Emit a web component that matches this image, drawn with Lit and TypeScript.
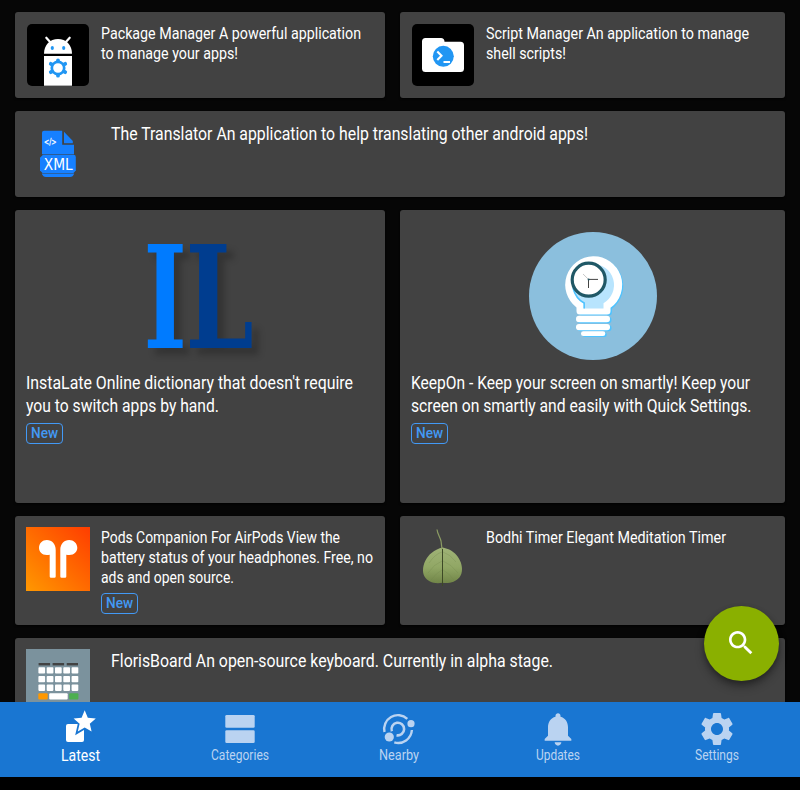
import { LitElement, html, css, svg } from "lit";
import { customElement, property } from "lit/decorators.js";

type Line = [text: string, width: number];

interface AppCard {
  icon: string;
  layout: "small" | "wide" | "large";
  lines: Line[];
  isNew?: boolean;
}

const cards: AppCard[] = [
  { icon: "package", layout: "small", lines: [["Package Manager A powerful application", 260], ["to manage your apps!", 137]] },
  { icon: "script", layout: "small", lines: [["Script Manager An application to manage", 263], ["shell scripts!", 80]] },
  { icon: "xml", layout: "wide", lines: [["The Translator An application to help translating other android apps!", 477]] },
  { icon: "instalate", layout: "large", isNew: true, lines: [["InstaLate Online dictionary that doesn't require", 327], ["you to switch apps by hand.", 193]] },
  { icon: "keepon", layout: "large", isNew: true, lines: [["KeepOn - Keep your screen on smartly! Keep your", 339], ["screen on smartly and easily with Quick Settings.", 340.5]] },
  { icon: "pods", layout: "small", isNew: true, lines: [["Pods Companion For AirPods View the", 239], ["battery status of your headphones. Free, no", 272], ["ads and open source.", 133]] },
  { icon: "bodhi", layout: "small", lines: [["Bodhi Timer Elegant Meditation Timer", 240]] },
  { icon: "floris", layout: "wide", lines: [["FlorisBoard An open-source keyboard. Currently in alpha stage.", 442]] },
];

const tabs: { icon: string; label: Line }[] = [
  { icon: "latest", label: ["Latest", 39] },
  { icon: "categories", label: ["Categories", 58] },
  { icon: "nearby", label: ["Nearby", 40] },
  { icon: "updates", label: ["Updates", 44] },
  { icon: "settings", label: ["Settings", 44] },
];

const keyCols = [0, 1, 2, 3, 4];
const keyRows = [18.3, 27, 35.6];

const art: Record<string, unknown> = {
  package: svg`
    <rect x="1" y="1" width="62" height="62" rx="5" fill="#000"/>
    <path d="M18 30.700C18 22 24 16 32 16s14 6 14 14.700z" fill="#fff"/>
    <path d="M20.300 14.700l4.500 5M43.700 14.700l-4.500 5" stroke="#fff" stroke-width="2.200" stroke-linecap="round"/>
    <ellipse cx="26.300" cy="25" rx="1.600" ry="2" fill="#2196f3"/><ellipse cx="37.700" cy="25" rx="1.600" ry="2" fill="#2196f3"/>
    <rect x="18" y="33" width="28" height="29.700" fill="#fff"/>
    <g stroke="#2196f3" fill="none">
      <circle cx="32" cy="45" r="6.200" stroke-width="2.700"/>
      <path stroke-width="3.800" stroke-linecap="round" d="M32 38v-.7M32 52v.7M38.300 41.300l.9-.5M38.300 48.700l.9.5M25.700 41.300l-.9-.5M25.700 48.700l-.9.5"/>
    </g>`,
  script: svg`
    <rect x="1" y="1" width="62" height="62" rx="5" fill="#000"/>
    <path d="M14.500 15H30a3.500 3.500 0 0 1 3.500 3.700H49.500A3.500 3.500 0 0 1 53 22.200V45.500A3.500 3.500 0 0 1 49.500 49h-35A3.500 3.500 0 0 1 11 45.500v-27A3.500 3.500 0 0 1 14.500 15z" fill="#fff"/>
    <circle cx="32.300" cy="33.300" r="10.500" fill="#2196f3"/>
    <path d="M26.300 28.500l4.200 4.300-4.200 4.300M32.500 39h6.500" fill="none" stroke="#fff" stroke-width="2.100"/>`,
  xml: svg`
    <g fill="#1680ff">
      <path d="M18 8.700H36.200V22.800H48V32.200H16V10.700a2 2 0 0 1 2-2z"/>
      <path d="M38 9.700V21.200H46.800V19z"/>
      <path d="M17 32.800H47.500a2.300 2.300 0 0 1 2.300 2.300V48.500L47.500 51H16.500L14 48.500V35.800z"/>
      <path d="M15.800 51.500H48.200C47.500 54 46 55 44 55H20C18 55 16.500 54 15.800 51.500z"/>
    </g>
    <text x="18" y="23.300" font-family="DejaVu Sans, sans-serif" font-size="9" textLength="12.500" lengthAdjust="spacingAndGlyphs" fill="#fff" stroke="#fff" stroke-width=".3">&lt;/&gt;</text>
    <text x="17.800" y="47.700" font-family="DejaVu Sans, sans-serif" font-size="15.500" textLength="29" lengthAdjust="spacingAndGlyphs" fill="#fff">XML</text>`,
  instalate: svg`
    <g font-family="DejaVu Serif, serif" font-weight="700" font-size="142.700" class="logo">
      <text transform="translate(7.600 116) scale(.65 1)" fill="#007bff">I</text>
      <text transform="translate(49.500 116) scale(.68 1)" fill="#003d8f">L</text>
    </g>`,
  keepon: svg`
    <circle cx="64" cy="64" r="64" fill="#8bbfdd"/>
    <g fill="#4fc3ff" transform="translate(1.500 1)">
      <path d="M64 24.300a28.700 28.700 0 0 1 17.500 51.500V79a3.500 3.500 0 0 1-3.500 3.500H51.300A3.500 3.500 0 0 1 48 79v-3.500A28.700 28.700 0 0 1 64 24.300z"/>
      <rect x="47" y="83.700" width="34" height="6.600" rx="3.300"/><rect x="47" y="92" width="34" height="6.300" rx="3"/><rect x="52" y="99.300" width="24.300" height="4.700" rx="2.300"/>
    </g>
    <g fill="#fff">
      <path d="M64 24.300a28.500 28.500 0 0 1 17.500 51.500V79a3.500 3.500 0 0 1-3.500 3.500H51A3.500 3.500 0 0 1 47.500 79v-3.500A28.500 28.500 0 0 1 64 24.300z"/>
      <rect x="47" y="83.700" width="34" height="6.600" rx="3.300"/><rect x="47" y="92" width="34" height="6.300" rx="3"/><rect x="52" y="99.300" width="24.300" height="4.700" rx="2.300"/>
    </g>
    <path d="M64 32a21 21 0 0 1 10.500 39.200V76.500H54.500V71.500A21 21 0 0 1 64 32z" fill="#b8e4fd"/>
    <path d="M44 56q3 11 11.200 15V76.500" fill="none" stroke="#4fc3ff" stroke-width="1.500"/>
    <circle cx="59.700" cy="47.700" r="16.500" fill="#fff" stroke="#205866" stroke-width="3.200"/>
    <path d="M69 47.400H59.500V56" fill="none" stroke="#444" stroke-width="1"/>
    <path d="M59.500 47.400L54 42" stroke="#bbb" stroke-width=".8"/><circle cx="59.600" cy="47.400" r="1" fill="#205866"/>`,
  pods: svg`
    <defs><linearGradient id="g" x1="0" y1="1" x2="1" y2="0"><stop offset="0" stop-color="#ff9800"/><stop offset="1" stop-color="#ff3d00"/></linearGradient></defs>
    <rect width="64" height="64" fill="url(#g)"/>
    <path fill="#fff" d="M20.800 13C26 13 29.700 17 29.700 23V49.500a1.300 1.300 0 0 1-1.300 1.300H25a1.300 1.300 0 0 1-1.300-1.300V27.700C17 29.300 13 25.500 13 20.800 13 16.300 16.500 13 20.800 13z"/>
    <path fill="#fff" d="M43.200 13C38 13 34.300 17 34.300 23V49.500a1.300 1.300 0 0 0 1.300 1.300H39a1.300 1.300 0 0 0 1.300-1.300V27.700C47 29.300 51.300 25.500 51.300 20.800 51.300 16.300 47.500 13 43.200 13z"/>`,
  bodhi: svg`
    <defs><linearGradient id="l" x1="0" y1="0" x2="0" y2="1"><stop offset="0" stop-color="#a0b377"/><stop offset=".55" stop-color="#91a765"/><stop offset="1" stop-color="#718548"/></linearGradient></defs>
    <path d="M31.300 20.500C35 21.300 40 22.500 44 26.500c4.500 4.500 7 10 7 15.500 0 7-3.500 10.500-8.500 12.700-3 1.300-7.500 1.600-11 1.100-5 .8-9.500.3-12.500-1.300-4.500-2.300-7-6-7-11 0-7 3.500-13.500 8.500-17.500 3.500-3 7.500-4.500 10.800-5.500z" fill="url(#l)"/>
    <path d="M31 25Q24 27 18 36M31 34Q23 37 17 46M31 43Q25 46 20 53M32 25Q39 27 45 35M32 34Q40 37 47 46M32 43Q38 46 43 53" fill="none" stroke="#71854c" stroke-width=".7" opacity=".4"/>
    <path d="M26 2.500C26.500 7 29 10 30 14c.6 3 .3 5 1.200 8" fill="none" stroke="#8b9b63" stroke-width="1.200"/>
    <path d="M31.500 22V59" stroke="#3d4926" stroke-width="1"/>`,
  floris: svg`
    <rect width="64" height="64" fill="#7b929d"/>
    <g fill="#424242"><rect x="12.600" y="14" width="11.500" height="2.400"/><rect x="26.600" y="14" width="11.500" height="2.400"/><rect x="40.700" y="14" width="11.300" height="2.400"/></g>
    ${keyRows.map((y) => keyCols.map((c) => svg`<rect x=${12.4 + c * 8.3} y=${y} width="6.700" height="6.300" rx=".8" fill="#fff"/>`))}
    <rect x="12.300" y="44.200" width="9.400" height="6.300" rx="1" fill="#ff9800"/><rect x="23.200" y="44.200" width="18.500" height="6.300" rx="1" fill="#fff"/><rect x="43.200" y="44.200" width="9.200" height="6.300" rx="1" fill="#4caf50"/>`,
  latest: svg`
    <rect x="5" y="15" width="18" height="18" rx="2"/>
    <path d="M23.700 1.200l3.100 7.500 8 .7-6 5.300 1.800 7.900-6.900-4.200-6.900 4.200 1.800-7.900-6-5.300 8-.7z" stroke="#1976d2" stroke-width="3.500"/>
    <path d="M23.700 1.200l3.100 7.500 8 .7-6 5.300 1.800 7.900-6.900-4.200-6.900 4.200 1.800-7.900-6-5.300 8-.7z"/>`,
  categories: svg`<rect x="5.300" y="6" width="29.400" height="12.800" rx="1.300"/><rect x="5.300" y="21.200" width="29.400" height="12.800" rx="1.300"/>`,
  nearby: svg`
    <g fill="none" stroke="currentColor" stroke-width="2.400">
      <path d="M5.500 23A13.800 13.800 0 0 1 28.300 9.800"/><path d="M32.900 21A13.800 13.800 0 0 1 15.300 33.400"/>
      <path stroke-width="2.600" d="M12.900 22.200A6.300 6.300 0 1 1 17.500 26.200"/>
    </g>
    <circle cx="32" cy="14.700" r="3.600"/><circle cx="10.300" cy="28" r="4.600"/>`,
  updates: svg`<path transform="scale(1.667)" d="M12 22c1.100 0 2-.9 2-2h-4c0 1.100.89 2 2 2zm6-6v-5c0-3.070-1.640-5.640-4.500-6.320V4c0-.83-.67-1.500-1.500-1.500s-1.500.67-1.500 1.500v.68C7.630 5.360 6 7.920 6 11v5l-2 2v1h16v-1l-2-2z"/>`,
  settings: svg`<path transform="scale(1.667)" d="M19.140 12.940c.04-.3.060-.61.060-.94 0-.32-.02-.64-.07-.94l2.030-1.580c.18-.14.230-.41.120-.61l-1.920-3.320c-.12-.22-.37-.29-.59-.22l-2.390.96c-.5-.38-1.030-.7-1.620-.94l-.36-2.540c-.04-.24-.24-.41-.48-.41h-3.840c-.24 0-.43.170-.47.410l-.36 2.540c-.59.240-1.130.570-1.620.94l-2.390-.96c-.22-.08-.47 0-.59.220L2.740 8.870c-.12.210-.08.470.12.610l2.030 1.580c-.05.300-.09.630-.09.940s.02.640.07.940l-2.030 1.580c-.18.140-.23.410-.12.610l1.920 3.320c.12.220.37.290.59.220l2.390-.96c.5.380 1.030.700 1.620.94l.36 2.540c.05.240.24.410.48.410h3.840c.24 0 .44-.17.470-.41l.36-2.540c.59-.24 1.130-.56 1.620-.94l2.390.96c.22.080.47 0 .59-.22l1.920-3.320c.12-.22.070-.47-.12-.61l-2.010-1.580zM12 15.600c-1.980 0-3.600-1.620-3.600-3.600s1.620-3.600 3.600-3.600 3.600 1.620 3.600 3.600-1.620 3.600-3.600 3.600z"/>`,
  search: svg`<path d="M15.500 14h-.79l-.28-.27C15.410 12.590 16 11.110 16 9.500 16 5.910 13.090 3 9.500 3S3 5.910 3 9.500 5.910 16 9.500 16c1.610 0 3.090-.59 4.230-1.570l.27.280v.79l5 4.990L20.490 19l-4.990-5zm-6 0C7.010 14 5 11.990 5 9.500S7.010 5 9.500 5 14 7.010 14 9.500 11.990 14 9.500 14z"/>`,
};

/** One line of condensed text, set to a fixed advance width. */
@customElement("condensed-line")
class CondensedLine extends LitElement {
  @property() text = "";
  @property({ type: Number }) width = 0;
  @property({ type: Number }) size = 16;
  @property({ type: Number }) line = 20;
  @property({ type: Number }) base = 16;

  static styles = css`
    :host { display: block; }
    .line { display: block; overflow: visible; fill: currentColor; font-family: Roboto, "Liberation Sans", sans-serif; }
  `;

  render() {
    return html`<svg class="line" width=${Math.ceil(this.width) + 1} height=${this.line}>
      <text x="0" y=${this.base} font-size=${this.size} textLength=${this.width} lengthAdjust="spacingAndGlyphs">${this.text}</text>
    </svg>`;
  }
}

@customElement("app-card")
class AppCardElement extends LitElement {
  @property({ attribute: false }) card!: AppCard;

  static styles = css`
    :host { display: block; min-width: 0; }
    :host([wide]) { grid-column: 1 / -1; }
    .card { box-sizing: border-box; height: 100%; display: flex; gap: 11px; padding: 11px; background: #424242; border-radius: 3px; color: #fff; box-shadow: 0 1px 2px rgba(0, 0, 0, 0.8); }
    .wide { gap: 21px; }
    .large { flex-direction: column; padding-top: 22px; }
    .icon { flex: none; display: block; width: 64px; height: 64px; overflow: visible; }
    .large .icon { width: 128px; height: 128px; align-self: center; }
    .logo { filter: drop-shadow(7px 7px 3px rgba(0, 0, 0, 0.22)); }
    .badge { box-sizing: border-box; width: 37px; height: 21px; margin-top: 6px; padding-left: 4px; border: 1px solid #4299f5; border-radius: 4px; color: #4299f5; font-weight: 500; }
  `;

  render() {
    const { icon, layout, lines, isNew } = this.card;
    const small = layout === "small";
    const box = layout === "large" ? 128 : 64;
    return html`<div class="card ${layout}">
      <svg class="icon" viewBox="0 0 ${box} ${box}">${art[icon]}</svg>
      <div>
        ${lines.map(([text, width]) => html`<condensed-line .text=${text} .width=${width} .size=${small ? 16.4 : 18.2} .line=${small ? 20 : 23} .base=${small ? 16 : 18}></condensed-line>`)}
        ${isNew ? html`<div class="badge"><condensed-line .text=${"New"} .width=${27} .size=${15} .line=${19} .base=${14}></condensed-line></div>` : ""}
      </div>
    </div>`;
  }
}

@customElement("app-root")
class AppRoot extends LitElement {
  static styles = css`
    :host { display: flex; flex-direction: column; position: relative; width: 800px; height: 790px; overflow: hidden; background: #000; }
    .list { box-sizing: border-box; height: 702px; overflow: hidden; display: grid; grid-template-columns: 370px 385px; grid-template-rows: 86px 86px 293px 109px 86px; gap: 13px 15px; padding: 12px 15px 0; background: #060606; }
    .nav { height: 75px; flex: none; display: flex; padding-left: 1.5px; background: #1976d2; }
    .tab { width: 159px; padding-top: 7px; display: flex; flex-direction: column; align-items: center; color: #bad3f1; }
    .tab.active { color: #fff; }
    .glyph { display: block; width: 40px; height: 40px; fill: currentColor; }
    .fab { position: absolute; left: 704px; top: 606px; width: 75px; height: 75px; display: flex; align-items: center; justify-content: center; border-radius: 50%; background: #8ab000; box-shadow: 0 6px 10px rgba(0, 0, 0, 0.3), 0 2px 5px rgba(0, 0, 0, 0.25); }
    .search { width: 32px; height: 32px; fill: #fff; margin: 0 1px 1px 0; }
  `;

  render() {
    return html`
      <div class="list">
        ${cards.map((card) => html`<app-card .card=${card} ?wide=${card.layout === "wide"}></app-card>`)}
      </div>
      <div class="nav">
        ${tabs.map(({ icon, label: [text, width] }, i) => html`<div class="tab ${i === 0 ? "active" : ""}">
          <svg class="glyph" viewBox="0 0 40 40">${art[icon]}</svg>
          <condensed-line .text=${text} .width=${width} .size=${i === 0 ? 16 : 13.8} .line=${16} .base=${i === 0 ? 12 : 11}></condensed-line>
        </div>`)}
      </div>
      <div class="fab"><svg class="search" viewBox="0 0 24 24">${art.search}</svg></div>
    `;
  }
}
